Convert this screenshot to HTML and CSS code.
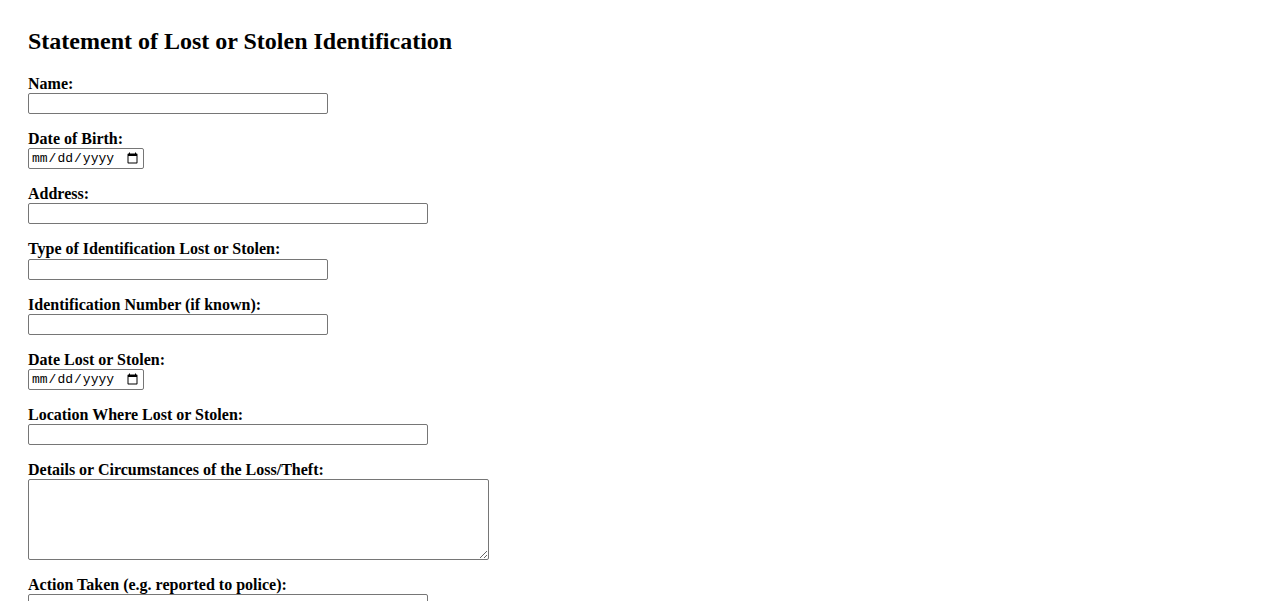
FILE: index.html
```html
<!DOCTYPE html>
<html lang="en">
<head>
<meta charset="utf-8">
<title>Statement of Lost or Stolen Identification</title>
<link rel="stylesheet" href="styles.css">
</head>
<body>
<div class="page">
  <h2 class="title">Statement of Lost or Stolen Identification</h2>
  <form class="form">
    <div class="field">
      <label class="label" for="name">Name:</label>
      <input class="input input-md" type="text" id="name">
    </div>
    <div class="field">
      <label class="label" for="dob">Date of Birth:</label>
      <input class="input input-date" type="date" id="dob">
    </div>
    <div class="field">
      <label class="label" for="address">Address:</label>
      <input class="input input-lg" type="text" id="address">
    </div>
    <div class="field">
      <label class="label" for="idtype">Type of Identification Lost or Stolen:</label>
      <input class="input input-md" type="text" id="idtype">
    </div>
    <div class="field">
      <label class="label" for="idnum">Identification Number (if known):</label>
      <input class="input input-md" type="text" id="idnum">
    </div>
    <div class="field">
      <label class="label" for="datelost">Date Lost or Stolen:</label>
      <input class="input input-date" type="date" id="datelost">
    </div>
    <div class="field">
      <label class="label" for="location">Location Where Lost or Stolen:</label>
      <input class="input input-lg" type="text" id="location">
    </div>
    <div class="field">
      <label class="label" for="details">Details or Circumstances of the Loss/Theft:</label>
      <textarea class="input textarea" id="details"></textarea>
    </div>
    <div class="field">
      <label class="label" for="action">Action Taken (e.g. reported to police):</label>
      <input class="input input-lg" type="text" id="action">
    </div>
  </form>
</div>
</body>
</html>
```
FILE: styles.css
```css
html, body {
  margin: 0;
  padding: 0;
  background: #fff;
}
body {
  font-family: "Liberation Serif", "Times New Roman", serif;
  color: #000;
}
.page {
  padding: 28px 28px 0;
}
.title {
  font-size: 24px;
  font-weight: bold;
  margin: 0 0 20px;
  line-height: normal;
}
.form {
  margin: 0;
}
.field {
  margin-bottom: 16px;
}
.label {
  display: block;
  font-size: 16px;
  font-weight: bold;
  line-height: 18.14px;
}
.input {
  display: block;
  box-sizing: border-box;
  height: 21px;
  margin: 0;
  padding: 1px 2px;
  border: 1px solid #767676;
  border-radius: 2px;
  background: #fff;
  font-family: "Liberation Sans", Arial, sans-serif;
  font-size: 13.333px;
}
.input-md { width: 300px; }
.input-lg { width: 400px; }
.input-date {
  width: 116px;
  font-family: "Liberation Mono", "DejaVu Sans Mono", monospace;
  font-size: 13px;
}
.textarea {
  width: 461px;
  height: 81px;
  resize: vertical;
}
```
